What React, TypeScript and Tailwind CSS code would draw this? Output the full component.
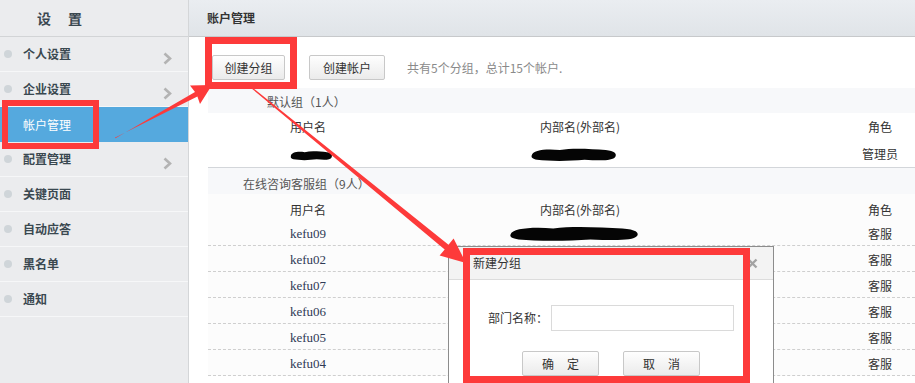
import type { ReactNode } from 'react';

const RED = '#fd3a3a';

const menu = [
  { label: '个人设置', arrow: true },
  { label: '企业设置', arrow: true },
  { label: '帐户管理', active: true },
  { label: '配置管理', arrow: true },
  { label: '关键页面' },
  { label: '自动应答' },
  { label: '黑名单' },
  { label: '通知' },
];

const kefuRows = ['kefu02', 'kefu07', 'kefu06', 'kefu05', 'kefu04'];

function Scribble({ w, h }: { w: number; h: number }) {
  return (
    <svg width={w} height={h} viewBox="0 0 100 20" preserveAspectRatio="none" className="block">
      <path
        d="M2,11 C3,4 18,2 34,4 C50,1 70,3 86,4 C96,5 99,9 97,13 C94,19 78,18 62,17 C44,19 22,19 8,17 C3,16 1,14 2,11 Z"
        fill="#050505"
      />
    </svg>
  );
}

function Chevron() {
  return (
    <svg width="9" height="13" viewBox="0 0 9 13" className="block">
      <polyline points="1.5,1.5 7,6.5 1.5,11.5" fill="none" stroke="#b3b3b3" strokeWidth="2.6" />
    </svg>
  );
}

function Sidebar() {
  return (
    <aside className="w-[189px] shrink-0 border-r border-[#d4d6d8] bg-[#ebecee]">
      <div className="flex h-[37px] items-center gap-[17px] border-b border-[#d2d4d6] pl-[37px] text-[14px] font-bold text-[#3a4750]">
        <span>设</span>
        <span>置</span>
      </div>
      {menu.map((item) => (
        <div
          key={item.label}
          className={
            item.active
              ? 'flex h-[35px] items-center bg-[#55a9de] pl-[23px] text-[12px] text-white'
              : 'flex h-[35px] items-center border-b border-[#f6f7f8] text-[12px] font-bold text-[#3a4850]'
          }
        >
          {!item.active && (
            <span className="ml-[4px] mr-[11px] h-[8px] w-[8px] rounded-full bg-[#cfd5d9]" />
          )}
          <span className="flex-1">{item.label}</span>
          {item.arrow && (
            <span className="mr-[16px] mt-[8px]">
              <Chevron />
            </span>
          )}
        </div>
      ))}
    </aside>
  );
}

function Button({ children, w }: { children: ReactNode; w: string }) {
  return (
    <button
      className={`flex h-[25px] ${w} items-center justify-center rounded-[2px] border border-[#c8c8c8] bg-gradient-to-b from-[#fefefe] to-[#ebebeb] text-[12px] text-[#333]`}
    >
      {children}
    </button>
  );
}

function Row({
  user,
  inner,
  role,
  className,
}: {
  user: ReactNode;
  inner?: ReactNode;
  role: string;
  className: string;
}) {
  return (
    <div className={`grid grid-cols-[200px_344px_1fr_70px] items-center ${className}`}>
      <div className="flex justify-center">{user}</div>
      <div className="flex justify-center">{inner}</div>
      <div />
      <div className="text-center">{role}</div>
    </div>
  );
}

function Dialog() {
  return (
    <div className="absolute left-[448px] top-[246px] h-[160px] w-[326px] border border-[#8c8c8c] bg-white">
      <div className="flex h-[33px] items-center justify-between border-b border-[#dcdcdc] bg-[#f3f3f3] pl-[24px] pr-[15px]">
        <span className="text-[12px] text-[#333]">新建分组</span>
        <svg width="11" height="11" viewBox="0 0 11 11">
          <path d="M1.5,1.5 L9.5,9.5 M9.5,1.5 L1.5,9.5" stroke="#a3a3a3" strokeWidth="2.4" />
        </svg>
      </div>
      <div className="flex items-center pl-[39px] pt-[25px]">
        <span className="w-[63px] text-[12px] text-[#333]">部门名称：</span>
        <div className="h-[26px] w-[183px] border border-[#dadada]" />
      </div>
      <div className="flex gap-[24px] pl-[73px] pt-[20px]">
        <Button w="w-[77px] gap-[13px]">
          <span>确</span>
          <span>定</span>
        </Button>
        <Button w="w-[77px] gap-[13px]">
          <span>取</span>
          <span>消</span>
        </Button>
      </div>
    </div>
  );
}

function Annotations() {
  return (
    <>
      <div className="absolute left-[2px] top-[100px] h-[49px] w-[97px] border-[6px] border-[#fd3a3a]" />
      <div className="absolute left-[205px] top-[37px] h-[52px] w-[92px] border-[7px] border-[#fd3a3a]" />
      <div className="absolute left-[463px] top-[248px] h-[135px] w-[287px] border-[7px] border-[#fd3a3a]" />
      <svg className="pointer-events-none absolute left-0 top-0" width="915" height="383">
        <polygon
          fill={RED}
          points="115.4,138.3 195,92 190,85.5 212,85 200,104 197.4,96.4 114.8,137.7"
        />
        <polygon
          fill={RED}
          points="252.5,87.6 448.5,244.8 453.6,238.6 466,263 439.6,255.6 444.7,249.4 251.6,88.4"
        />
      </svg>
    </>
  );
}

export default function App() {
  return (
    <div className="relative flex h-[383px] w-[915px] overflow-hidden bg-white font-['Noto_Sans_CJK_SC',sans-serif] text-[12px] leading-none text-[#333]">
      <Sidebar />
      <main className="min-w-0 flex-1">
        <div className="flex h-[37px] items-center border-b border-[#c7c9cb] bg-gradient-to-b from-[#eaedf1] to-[#e0e4e8] pl-[18px] text-[12px] font-bold text-[#333]">
          账户管理
        </div>
        <div className="flex items-center pb-[8px] pl-[23px] pt-[18px]">
          <Button w="w-[73px]">创建分组</Button>
          <div className="w-[24px]" />
          <Button w="w-[76px]">创建帐户</Button>
          <span className="ml-[22px] text-[12px] text-[#8a8a8a]">共有5个分组，总计15个帐户.</span>
        </div>
        <div className="ml-[19px]">
          <div className="flex h-[25px] items-center bg-[#f7f8fa] pl-[59px] pt-[2px] text-[#555]">默认组（1人）</div>
          <Row className="h-[28px]" user="用户名" inner="内部名(外部名)" role="角色" />
          <Row
            className="h-[27px] border-b border-[#d3d6da]"
            user={
              <span className="ml-[6px] pt-[2px]">
                <Scribble w={43} h={11} />
              </span>
            }
            inner={
              <span className="ml-[-12px]">
                <Scribble w={88} h={15} />
              </span>
            }
            role="管理员"
          />
          <div className="flex h-[26px] items-center bg-[#f7f8fa] pl-[35px] pt-[5px] text-[#555]">
            在线咨询客服组（9人）
          </div>
          <div className="bg-[#fcfcfc]">
            <Row className="h-[28px] pt-[3px]" user="用户名" inner="内部名(外部名)" role="角色" />
            <Row
              className="h-[24px] border-b border-dashed border-[#cfcfcf]"
              user={<span className="font-['Liberation_Serif',serif] text-[13px] text-[#2f3a55]">kefu09</span>}
              inner={
                <span className="ml-[-12px]">
                  <Scribble w={133} h={17} />
                </span>
              }
              role="客服"
            />
            {kefuRows.map((k) => (
              <Row
                key={k}
                className="h-[26px] border-b border-dashed border-[#cfcfcf] pt-[2px]"
                user={<span className="font-['Liberation_Serif',serif] text-[13px] text-[#2f3a55]">{k}</span>}
                role="客服"
              />
            ))}
          </div>
        </div>
      </main>
      <Dialog />
      <Annotations />
    </div>
  );
}
